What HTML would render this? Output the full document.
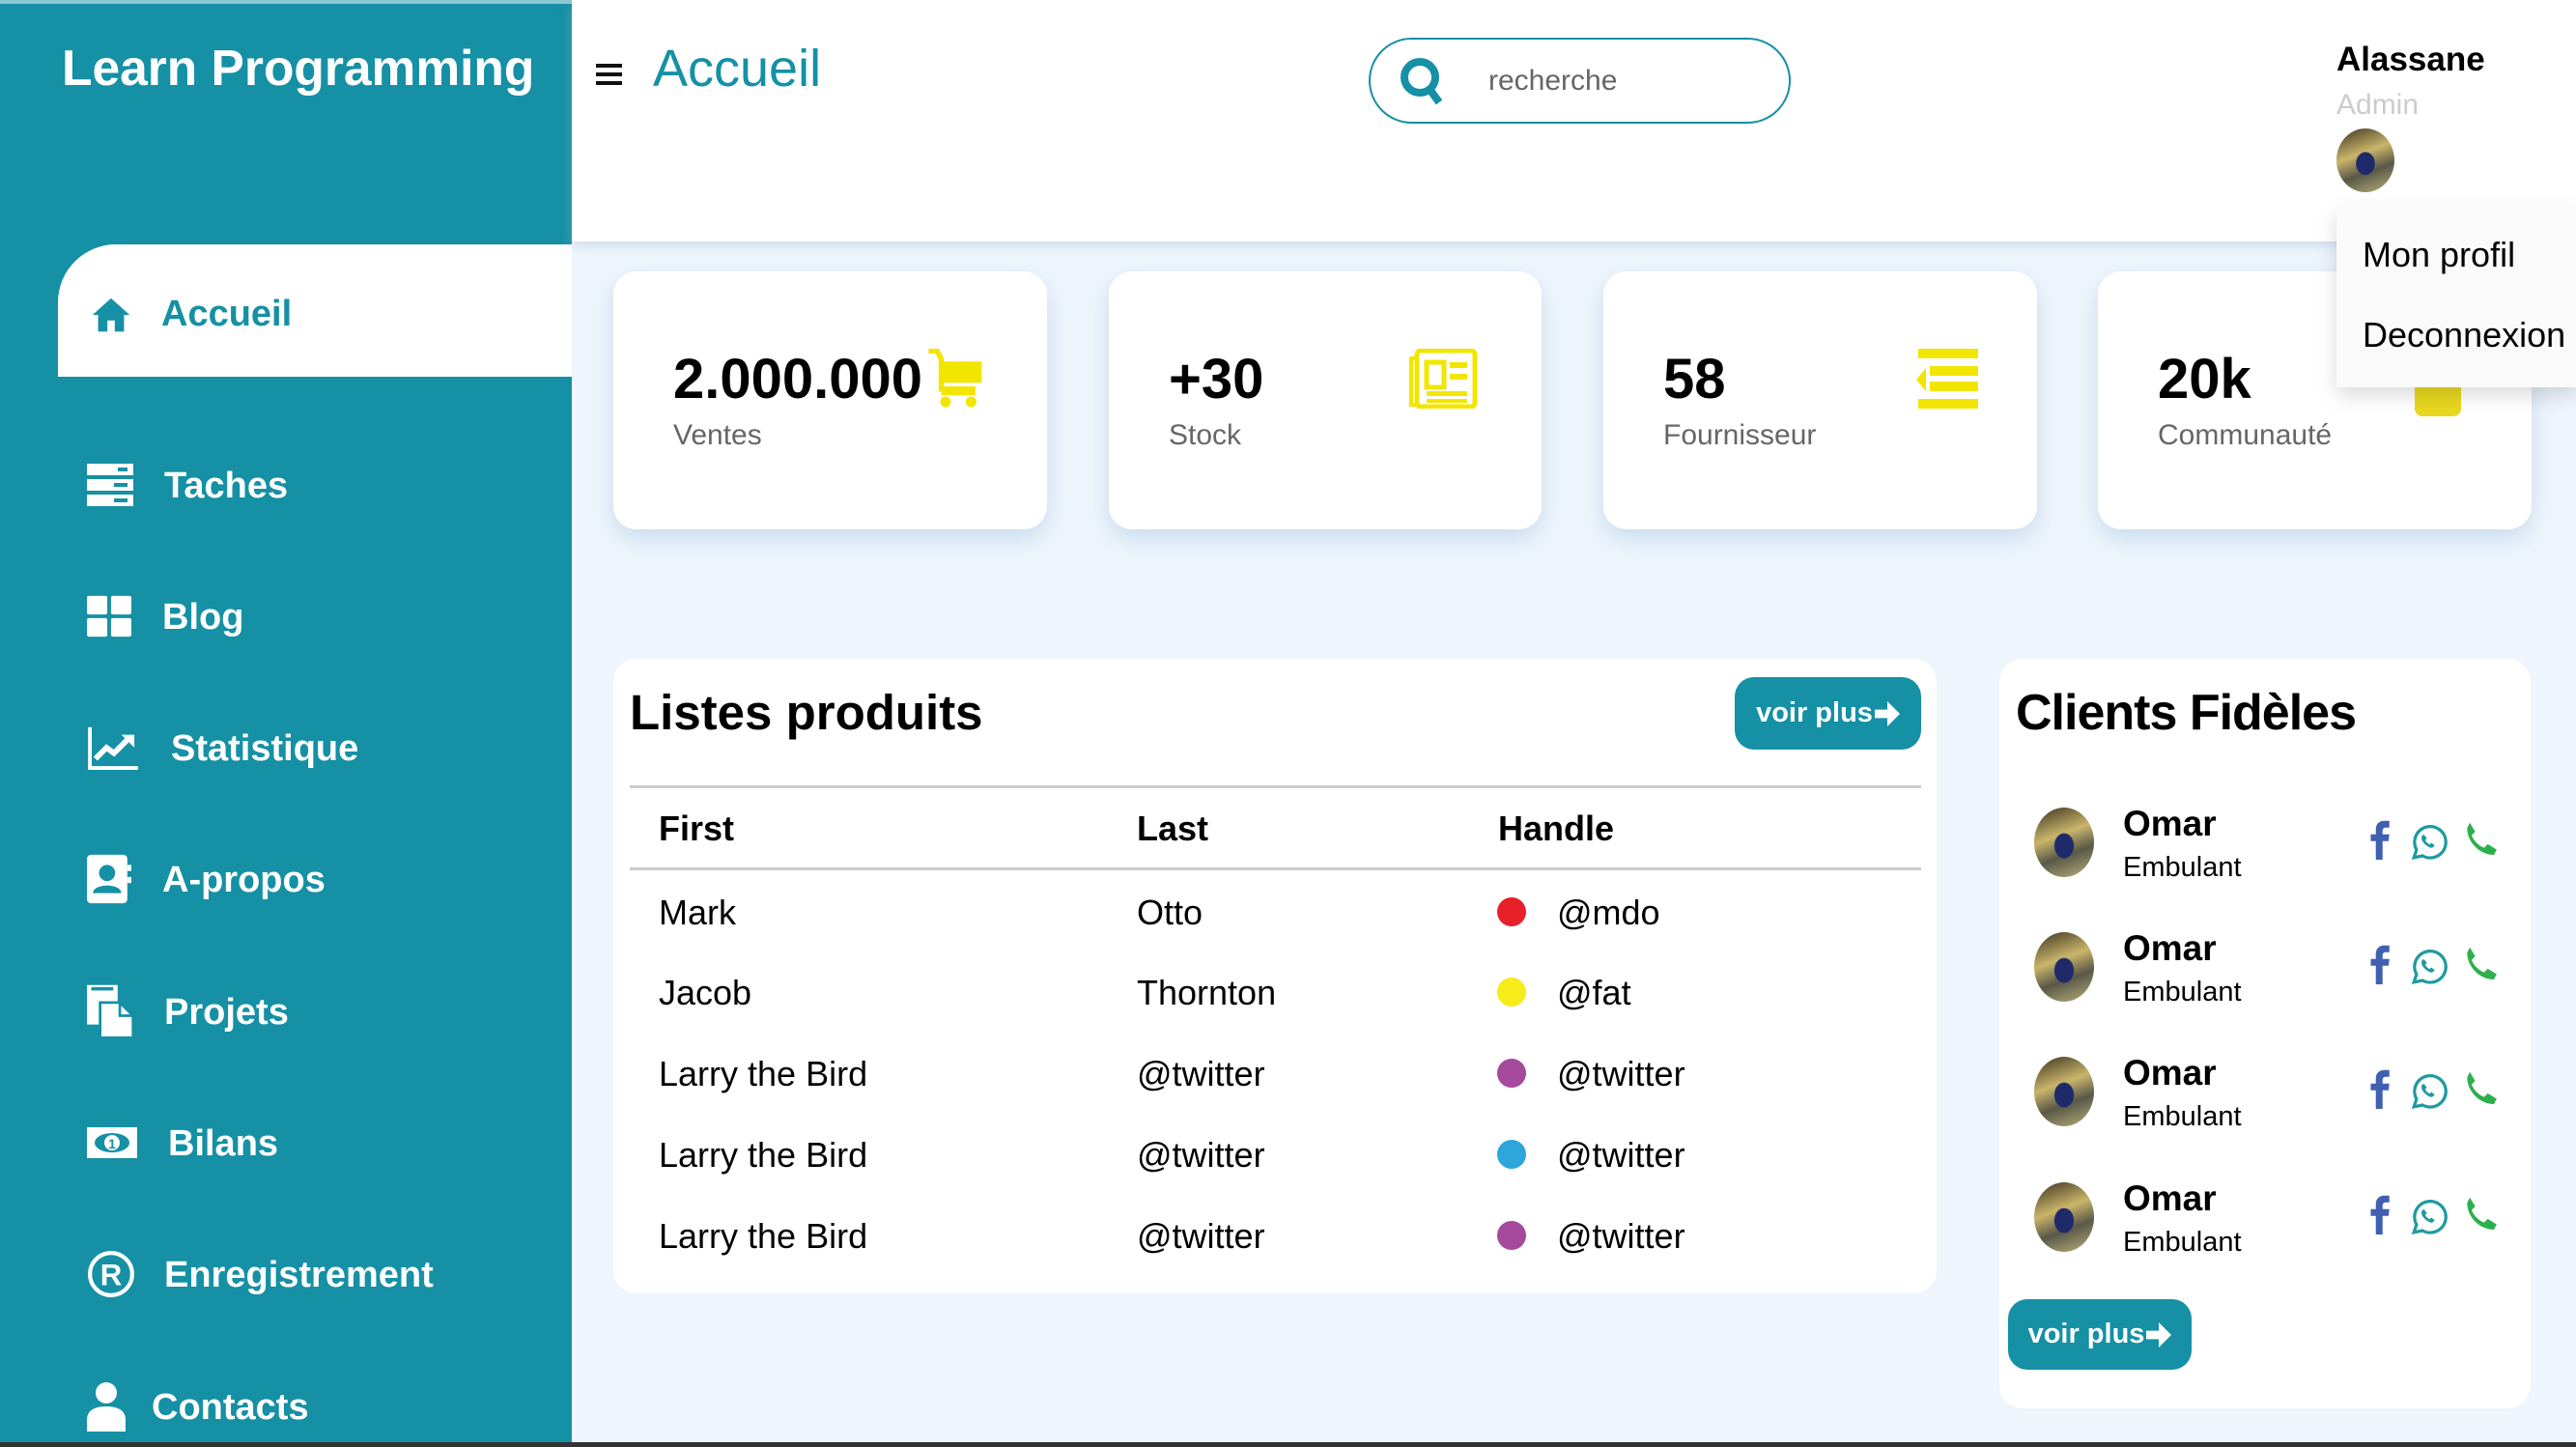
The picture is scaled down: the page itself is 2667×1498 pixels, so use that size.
<!DOCTYPE html>
<html><head><meta charset="utf-8">
<style>
*{margin:0;padding:0;box-sizing:border-box}
body{width:2667px;height:1498px;overflow:hidden;background:#eef5fc;font-family:"Liberation Sans",sans-serif;position:relative}
.abs{position:absolute}
#side{left:0;top:0;width:592px;height:1498px;background:#1590a5;border-top:4px solid #8cc9d3}
.logo{left:64px;top:40px;color:#fff;font-weight:bold;font-size:51.5px;white-space:nowrap}
.active{left:60px;top:253px;width:532px;height:137px;background:#fff;border-top-left-radius:60px}
.item{color:#fff;font-size:38px;font-weight:bold;white-space:nowrap;left:0;height:60px;display:flex;align-items:center}
.item svg{position:absolute;left:90px}
.item span{position:absolute;left:168px;top:10px}
#head{left:592px;top:0;width:2075px;height:250px;background:#fff;box-shadow:0 4px 12px rgba(150,180,210,.4)}
.card{background:#fff;border-radius:24px;box-shadow:0 10px 24px rgba(160,190,220,.45)}
.num{font-size:58px;font-weight:bold;color:#000;position:absolute;left:62px;top:78px}
.lbl{font-size:30px;color:#666;position:absolute;left:62px;top:153px}
.ic{position:absolute}
.dot{display:inline-block;width:30px;height:30px;border-radius:50%;position:absolute;left:1550px}
.btn{background:#1590a5;color:#fff;font-weight:bold;font-size:29px;border-radius:20px;display:flex;align-items:center;justify-content:center}
.av{border-radius:50%;background:radial-gradient(ellipse at 50% 55%,#1e2a6a 0 22%,transparent 24%),linear-gradient(160deg,#3a3020,#c9b56a 40%,#5a5848 65%,#b9b07a);}
.cname{font-size:37px;font-weight:bold;color:#000}
.csub{font-size:29px;color:#000}
</style></head><body>
<div id="side" class="abs"></div>
<div class="abs logo">Learn Programming</div>
<div class="abs active"></div>

<div class="abs item" style="top:296px;color:#1590a5"><svg width="46" height="46" viewBox="0 0 24 24" style="left:92px"><path d="M12 3 2 12h3v9h5v-6h4v6h5v-9h3z" fill="#1590a5"/></svg><span style="left:167px;top:8px">Accueil</span></div>
<div class="abs item" style="top:472px"><svg width="48" height="48" viewBox="0 0 24 24"><rect x="0" y="1" width="24" height="6" fill="#fff"/><rect x="0" y="9" width="24" height="6" fill="#fff"/><rect x="0" y="17" width="24" height="6" fill="#fff"/><rect x="16" y="3" width="5" height="2" fill="#1590a5"/><rect x="14" y="11" width="7" height="2" fill="#1590a5"/><rect x="14" y="19" width="7" height="2" fill="#1590a5"/></svg><span style="left:170px">Taches</span></div>
<div class="abs item" style="top:608px"><svg width="46" height="46" viewBox="0 0 24 24"><rect x="0" y="1" width="11" height="10" rx="1" fill="#fff"/><rect x="13" y="1" width="11" height="10" rx="1" fill="#fff"/><rect x="0" y="13" width="11" height="10" rx="1" fill="#fff"/><rect x="13" y="13" width="11" height="10" rx="1" fill="#fff"/></svg><span>Blog</span></div>
<div class="abs item" style="top:744px"><svg width="56" height="46" viewBox="0 0 28 24"><path d="M1 1v22h26" stroke="#fff" stroke-width="2" fill="none"/><path d="M4 18l6-6 4 3 8-8" stroke="#fff" stroke-width="3" fill="none"/><path d="M18 5h7v7z" fill="#fff"/></svg><span style="left:177px">Statistique</span></div>
<div class="abs item" style="top:880px"><svg width="46" height="52" viewBox="0 0 22 24"><rect x="0" y="0" width="20" height="24" rx="2" fill="#fff"/><circle cx="10" cy="9" r="4" fill="#1590a5"/><path d="M3 19c0-5 14-5 14 0z" fill="#1590a5"/><rect x="20" y="5" width="2" height="3" fill="#fff"/><rect x="20" y="11" width="2" height="3" fill="#fff"/></svg><span>A-propos</span></div>
<div class="abs item" style="top:1017px"><svg width="50" height="56" viewBox="0 0 22 24"><rect x="0" y="0" width="14" height="18" fill="#fff"/><rect x="2" y="1" width="10" height="1.5" fill="#1590a5"/><path d="M6 8h9l6 6v10H6z" fill="#fff" stroke="#1590a5" stroke-width="1.2"/><path d="M15 8v6h6" fill="none" stroke="#1590a5" stroke-width="1.2"/></svg><span style="left:170px">Projets</span></div>
<div class="abs item" style="top:1153px"><svg width="52" height="40" viewBox="0 0 26 20"><rect x="0" y="2" width="26" height="16" fill="#fff"/><ellipse cx="13" cy="10" rx="9" ry="5" fill="#1590a5"/><circle cx="13" cy="10" r="4" fill="#fff"/><text x="13" y="13" font-size="7" text-anchor="middle" fill="#1590a5" font-family="Liberation Sans" font-weight="bold">1</text></svg><span style="left:174px">Bilans</span></div>
<div class="abs item" style="top:1289px"><svg width="50" height="50" viewBox="0 0 24 24"><circle cx="12" cy="12" r="10.5" stroke="#fff" stroke-width="2" fill="none"/><text x="12" y="17.5" font-size="15" text-anchor="middle" fill="#fff" font-family="Liberation Sans" font-weight="bold">R</text></svg><span style="left:170px">Enregistrement</span></div>
<div class="abs item" style="top:1426px"><svg width="40" height="52" viewBox="0 0 20 26"><circle cx="10" cy="6" r="5.5" fill="#fff"/><path d="M0 26v-6c0-5 4-7 10-7s10 2 10 7v6z" fill="#fff"/></svg><span style="left:157px">Contacts</span></div>

<div id="head" class="abs"></div>
<div class="abs" style="left:617px;top:66px;width:27px"><div style="height:4px;background:#111;margin-bottom:5px"></div><div style="height:4px;background:#111;margin-bottom:5px"></div><div style="height:4px;background:#111"></div></div>
<div class="abs" style="left:676px;top:40px;font-size:54px;color:#1590a5">Accueil</div>
<div class="abs" style="left:1417px;top:39px;width:437px;height:89px;border:2px solid #1590a5;border-radius:45px"></div>
<svg class="abs" style="left:1448px;top:58px" width="48" height="52" viewBox="0 0 24 26"><circle cx="11" cy="11" r="8" stroke="#1590a5" stroke-width="4" fill="none"/><path d="M16 17l5 7" stroke="#1590a5" stroke-width="4"/></svg>
<div class="abs" style="left:1541px;top:67px;font-size:30px;color:#666">recherche</div>
<div class="abs" style="left:2419px;top:42px;font-size:35px;font-weight:bold;color:#000">Alassane</div>
<div class="abs" style="left:2419px;top:92px;font-size:30px;color:#ccc">Admin</div>
<div class="abs av" style="left:2419px;top:133px;width:60px;height:66px"></div>

<div class="abs card" style="left:635px;top:281px;width:449px;height:267px"><div class="num">2.000.000</div><div class="lbl">Ventes</div>
<svg class="ic" style="left:326px;top:80px" width="58" height="66" viewBox="0 0 26 30"><path d="M0 1h4l2 4v14h16" stroke="#f2e600" stroke-width="2.5" fill="none"/><path d="M6 6h19v10H6z" fill="#f2e600"/><circle cx="8" cy="25" r="2.5" fill="#f2e600"/><circle cx="20" cy="25" r="2.5" fill="#f2e600"/><rect x="6" y="19" width="16" height="3" fill="#f2e600"/></svg></div>
<div class="abs card" style="left:1148px;top:281px;width:448px;height:267px"><div class="num">+30</div><div class="lbl">Stock</div>
<svg class="ic" style="left:311px;top:80px" width="72" height="62" viewBox="0 0 36 31"><rect x="4" y="1" width="30" height="29" rx="2" stroke="#f2e600" stroke-width="2.5" fill="none"/><path d="M4 5H1v24h3" stroke="#f2e600" stroke-width="2" fill="none"/><rect x="9" y="7" width="9" height="13" stroke="#f2e600" stroke-width="2.5" fill="none"/><rect x="21" y="7" width="9" height="3" fill="#f2e600"/><rect x="21" y="13" width="9" height="3" fill="#f2e600"/><rect x="9" y="22" width="21" height="2.5" fill="#f2e600"/><rect x="9" y="26" width="21" height="2" fill="#f2e600"/></svg></div>
<div class="abs card" style="left:1660px;top:281px;width:449px;height:267px"><div class="num">58</div><div class="lbl">Fournisseur</div>
<svg class="ic" style="left:322px;top:80px" width="66" height="62" viewBox="0 0 33 31"><rect x="2" y="0" width="31" height="5" fill="#f2e600"/><rect x="8" y="9" width="25" height="5" fill="#f2e600"/><rect x="8" y="17" width="25" height="5" fill="#f2e600"/><rect x="2" y="26" width="31" height="5" fill="#f2e600"/><path d="M6 10l-5 6 5 6z" fill="#f2e600"/></svg></div>
<div class="abs card" style="left:2172px;top:281px;width:449px;height:267px"><div class="num">20k</div><div class="lbl">Communauté</div>
<div class="ic" style="left:328px;top:110px;width:48px;height:40px;background:#e8d820;border-radius:8px"></div></div>

<div class="abs" style="left:2419px;top:213px;width:248px;height:188px;background:#fafafa;box-shadow:0 8px 20px rgba(0,0,0,.15)"></div>
<div class="abs" style="left:2446px;top:243px;font-size:36px;color:#000">Mon profil</div>
<div class="abs" style="left:2446px;top:326px;font-size:36px;color:#000">Deconnexion</div>

<div class="abs card" style="left:635px;top:682px;width:1370px;height:657px;box-shadow:none"></div>
<div class="abs" style="left:652px;top:708px;font-size:51px;font-weight:bold;color:#000">Listes produits</div>
<div class="abs btn" style="left:1796px;top:701px;width:193px;height:75px">voir plus<svg width="26" height="26" viewBox="0 0 12 12" style="margin-left:2px"><path d="M0 4h6V0l6 6-6 6V8H0z" fill="#fff"/></svg></div>
<div class="abs" style="left:652px;top:813px;width:1337px;height:3px;background:#ccc"></div>
<div class="abs" style="left:652px;top:898px;width:1337px;height:3px;background:#ccc"></div>
<div class="abs" style="left:682px;top:837px;font-size:36px;font-weight:bold">First</div>
<div class="abs" style="left:1177px;top:837px;font-size:36px;font-weight:bold">Last</div>
<div class="abs" style="left:1551px;top:837px;font-size:36px;font-weight:bold">Handle</div>

<div class="abs" style="left:682px;top:924px;font-size:36px">Mark</div><div class="abs" style="left:1177px;top:924px;font-size:36px">Otto</div><div class="abs dot" style="top:929px;background:#e8202a"></div><div class="abs" style="left:1612px;top:924px;font-size:36px">@mdo</div>
<div class="abs" style="left:682px;top:1007px;font-size:36px">Jacob</div><div class="abs" style="left:1177px;top:1007px;font-size:36px">Thornton</div><div class="abs dot" style="top:1012px;background:#f5ec1a"></div><div class="abs" style="left:1612px;top:1007px;font-size:36px">@fat</div>
<div class="abs" style="left:682px;top:1091px;font-size:36px">Larry the Bird</div><div class="abs" style="left:1177px;top:1091px;font-size:36px">@twitter</div><div class="abs dot" style="top:1096px;background:#a4499b"></div><div class="abs" style="left:1612px;top:1091px;font-size:36px">@twitter</div>
<div class="abs" style="left:682px;top:1175px;font-size:36px">Larry the Bird</div><div class="abs" style="left:1177px;top:1175px;font-size:36px">@twitter</div><div class="abs dot" style="top:1180px;background:#2ea6dc"></div><div class="abs" style="left:1612px;top:1175px;font-size:36px">@twitter</div>
<div class="abs" style="left:682px;top:1259px;font-size:36px">Larry the Bird</div><div class="abs" style="left:1177px;top:1259px;font-size:36px">@twitter</div><div class="abs dot" style="top:1264px;background:#a4499b"></div><div class="abs" style="left:1612px;top:1259px;font-size:36px">@twitter</div>

<div class="abs card" style="left:2070px;top:682px;width:550px;height:776px;box-shadow:none"></div>
<div class="abs" style="left:2087px;top:708px;font-size:52px;font-weight:bold;color:#000;letter-spacing:-1px">Clients Fidèles</div>

<div class="abs av" style="left:2106px;top:836px;width:62px;height:72px"></div>
<div class="abs cname" style="left:2198px;top:832px">Omar</div><div class="abs csub" style="left:2198px;top:882px">Embulant</div>
<div class="abs av" style="left:2106px;top:965px;width:62px;height:72px"></div>
<div class="abs cname" style="left:2198px;top:961px">Omar</div><div class="abs csub" style="left:2198px;top:1011px">Embulant</div>
<div class="abs av" style="left:2106px;top:1094px;width:62px;height:72px"></div>
<div class="abs cname" style="left:2198px;top:1090px">Omar</div><div class="abs csub" style="left:2198px;top:1140px">Embulant</div>
<div class="abs av" style="left:2106px;top:1224px;width:62px;height:72px"></div>
<div class="abs cname" style="left:2198px;top:1220px">Omar</div><div class="abs csub" style="left:2198px;top:1270px">Embulant</div>

<svg width="0" height="0" style="position:absolute"><defs>
<g id="fb"><path d="M9 24V13H6V9h3V6c0-3 2-5 5-5h3v4h-2c-1 0-2 .5-2 2v2h4l-.5 4H13v11z" fill="#4060b0"/></g>
<g id="wa"><path d="M4 21l1.5-4.5A9 9 0 1 1 9 20z" fill="none" stroke="#1e9aa0" stroke-width="1.8"/><path d="M9 8c-1 1-1 3 1 5s4 3 5 2l1-1-2-1.5-1 1c-1-.5-2-1.5-2.5-2.5l1-1L10 8z" fill="#1e9aa0"/></g>
<g id="ph"><path d="M6 2l3 5-2 2c1 3 4 6 7 7l2-2 5 3-1.5 3c-8 0-15-7-15-15z" fill="#2db04b"/></g>
</defs></svg>
<svg class="abs" style="left:2444px;top:848px" width="160" height="520" viewBox="0 0 160 520">
<g><use href="#fb" transform="scale(1.75)"/><use href="#wa" transform="translate(48,2) scale(1.8)"/><use href="#ph" transform="translate(102,0) scale(1.85)"/></g>
<g transform="translate(0,129)"><use href="#fb" transform="scale(1.75)"/><use href="#wa" transform="translate(48,2) scale(1.8)"/><use href="#ph" transform="translate(102,0) scale(1.85)"/></g>
<g transform="translate(0,258)"><use href="#fb" transform="scale(1.75)"/><use href="#wa" transform="translate(48,2) scale(1.8)"/><use href="#ph" transform="translate(102,0) scale(1.85)"/></g>
<g transform="translate(0,388)"><use href="#fb" transform="scale(1.75)"/><use href="#wa" transform="translate(48,2) scale(1.8)"/><use href="#ph" transform="translate(102,0) scale(1.85)"/></g>
</svg>
<div class="abs btn" style="left:2079px;top:1345px;width:190px;height:73px">voir plus<svg width="26" height="26" viewBox="0 0 12 12" style="margin-left:2px"><path d="M0 4h6V0l6 6-6 6V8H0z" fill="#fff"/></svg></div>

<div class="abs" style="left:0;top:1493px;width:2667px;height:5px;background:#333"></div>
</body></html>
